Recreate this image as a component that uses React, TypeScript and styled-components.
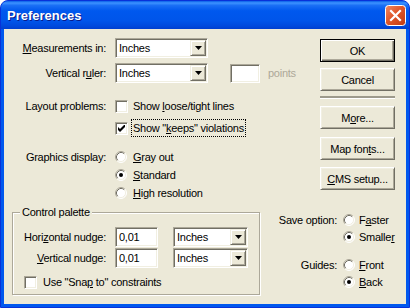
import React from 'react';
import styled, { createGlobalStyle } from 'styled-components';

const GlobalStyle = createGlobalStyle`
  html, body {
    margin: 0;
    padding: 0;
    background: #fff;
  }
  body {
    font-family: "Liberation Sans", Arial, sans-serif;
    font-size: 11px;
    line-height: 14px;
    letter-spacing: -0.25px;
    color: #000;
  }
`;

const Window = styled.div`
  width: 410px;
  height: 308px;
  box-sizing: border-box;
  display: flex;
  flex-direction: column;
  background: #0058ee;
  border: 1px solid #0831d9;
  border-radius: 8px 8px 0 0;
  overflow: hidden;
`;

const TitleBar = styled.div`
  height: 28px;
  flex-shrink: 0;
  display: flex;
  align-items: center;
  justify-content: space-between;
  padding: 1px 3px 0 6px;
  box-sizing: border-box;
  background: linear-gradient(
    180deg,
    #0a5fe8 0%,
    #3d93ff 7%,
    #1a6ff5 16%,
    #0058ee 35%,
    #0055ea 70%,
    #0049dc 90%,
    #003fcf 100%
  );
`;

const Title = styled.span`
  font-family: "Liberation Sans", Arial, sans-serif;
  font-weight: bold;
  font-size: 13px;
  letter-spacing: 0;
  color: #fff;
  text-shadow: 1px 1px 0 #0a1a8a;
`;

const CloseButton = styled.div`
  width: 21px;
  height: 21px;
  display: flex;
`;

const Client = styled.div`
  flex: 1;
  margin: 0 3px 3px 3px;
  background: #ece9d8;
  display: flex;
  flex-direction: column;
`;

const TopSection = styled.div`
  display: flex;
`;

const FormArea = styled.div`
  flex: 1;
  display: flex;
  flex-direction: column;
`;

const ButtonColumn = styled.div`
  width: 75px;
  margin: 10px 11px 0 0;
  display: flex;
  flex-direction: column;
`;

const BottomSection = styled.div`
  display: flex;
  align-items: flex-start;
`;

const FormRow = styled.div<{ $h?: number; $mt?: number }>`
  display: flex;
  align-items: center;
  height: ${p => p.$h ?? 20}px;
  margin-top: ${p => p.$mt ?? 0}px;
  white-space: nowrap;
`;

const Label = styled.span<{ $w: number; $gap?: number }>`
  width: ${p => p.$w}px;
  flex-shrink: 0;
  text-align: right;
  margin-right: ${p => p.$gap ?? 9}px;
  white-space: nowrap;
`;

const Sunken = styled.div<{ $w: number; $h?: number; $ml?: number }>`
  width: ${p => p.$w}px;
  height: ${p => p.$h ?? 20}px;
  margin-left: ${p => p.$ml ?? 0}px;
  box-sizing: border-box;
  flex-shrink: 0;
  display: flex;
  align-items: center;
  background: #fff;
  border: 1px solid;
  border-color: #aca899 #fff #fff #aca899;
  box-shadow: inset 1px 1px 0 #716f64, inset -1px -1px 0 #f1efe2;
  padding: 1px;
`;

const FieldText = styled.span`
  padding-left: 2px;
`;

const DropButton = styled.div`
  width: 16px;
  height: 16px;
  margin-left: auto;
  box-sizing: border-box;
  display: flex;
  align-items: center;
  justify-content: center;
  background: #ece9d8;
  border: 1px solid;
  border-color: #f1efe2 #716f64 #716f64 #f1efe2;
  box-shadow: inset 1px 1px 0 #fff, inset -1px -1px 0 #aca899;
`;

const DisabledText = styled.span`
  margin-left: 8px;
  color: #aca899;
`;

const PushButton = styled.div<{ $default?: boolean; $mt?: number }>`
  width: 75px;
  height: 23px;
  margin-top: ${p => p.$mt ?? 0}px;
  box-sizing: border-box;
  display: flex;
  align-items: center;
  justify-content: center;
  background: #ece9d8;
  border: 1px solid;
  border-color: ${p => (p.$default ? '#000' : '#fff #716f64 #716f64 #fff')};
  box-shadow: ${p =>
    p.$default
      ? 'inset 1px 1px 0 #fff, inset -1px -1px 0 #716f64, inset -2px -2px 0 #aca899'
      : 'inset 1px 1px 0 #f1efe2, inset -1px -1px 0 #aca899'};
`;

const Separator = styled.div`
  height: 2px;
  margin-top: 5px;
  background: #9d9a8c;
  border-bottom: 1px solid #fff;
`;

const CheckBox = styled.span`
  width: 13px;
  height: 13px;
  box-sizing: border-box;
  flex-shrink: 0;
  display: flex;
  align-items: center;
  justify-content: center;
  background: #fff;
  border: 1px solid;
  border-color: #aca899 #fff #fff #aca899;
  box-shadow: inset 1px 1px 0 #716f64, inset -1px -1px 0 #f1efe2;
`;

const OptionText = styled.span<{ $gap?: number }>`
  margin-left: ${p => p.$gap ?? 5}px;
`;

const FocusText = styled.span`
  margin-left: 3px;
  padding: 1px;
  border: 1px dotted #000;
`;

const U = styled.span`
  text-decoration: underline;
`;

const GroupBox = styled.fieldset`
  margin: 4px 0 0 8px;
  width: 248px;
  min-inline-size: 0;
  box-sizing: border-box;
  padding: 0 11px 4px 11px;
  border: 1px solid #aca899;
  box-shadow: inset 1px 1px 0 #fff, 1px 1px 0 #fff;
`;

const Legend = styled.legend`
  padding: 0 2px;
  margin-left: -4px;
  line-height: 12px;
  background: #ece9d8;
`;

const OptionsPanel = styled.div`
  margin-top: 10px;
  display: flex;
  flex-direction: column;
`;

const DownArrow = () => (
  <svg width="7" height="4" viewBox="0 0 7 4">
    <polygon points="0,0 7,0 3.5,4" fill="#000" />
  </svg>
);

const CheckMark = () => (
  <svg width="7" height="7" viewBox="0 0 7 7">
    <polygon points="0,2 2,4 6,0 7,0 7,2 2,7 0,5" fill="#000" />
  </svg>
);

const Radio = ({ checked }: { checked?: boolean }) => (
  <svg width="12" height="12" viewBox="0 0 12 12" style={{ flexShrink: 0 }}>
    <circle cx="6" cy="6" r="5" fill="#fff" />
    <path d="M2.11 9.89 A5.5 5.5 0 0 1 9.89 2.11" fill="none" stroke="#aca899" />
    <path d="M9.89 2.11 A5.5 5.5 0 0 1 2.11 9.89" fill="none" stroke="#fff" />
    <path d="M2.82 9.18 A4.5 4.5 0 0 1 9.18 2.82" fill="none" stroke="#716f64" />
    <path d="M9.18 2.82 A4.5 4.5 0 0 1 2.82 9.18" fill="none" stroke="#f1efe2" />
    {checked && <circle cx="6" cy="6" r="2" fill="#000" />}
  </svg>
);

const Combo = ({ w, value }: { w: number; value: string }) => (
  <Sunken $w={w}>
    <FieldText>{value}</FieldText>
    <DropButton>
      <DownArrow />
    </DropButton>
  </Sunken>
);

const App = () => (
  <>
    <GlobalStyle />
    <Window>
      <TitleBar>
        <Title>Preferences</Title>
        <CloseButton>
          <svg width="21" height="21" viewBox="0 0 21 21">
            <defs>
              <linearGradient id="closeGrad" x1="0" y1="0" x2="1" y2="1">
                <stop offset="0" stopColor="#f08a64" />
                <stop offset="0.45" stopColor="#e0572b" />
                <stop offset="1" stopColor="#c13a12" />
              </linearGradient>
            </defs>
            <rect x="0.5" y="0.5" width="20" height="20" rx="3" fill="url(#closeGrad)" stroke="#fff" />
            <path d="M6 6 L15 15 M15 6 L6 15" stroke="#fff" strokeWidth="2.2" strokeLinecap="square" />
          </svg>
        </CloseButton>
      </TitleBar>
      <Client>
        <TopSection>
          <FormArea>
            <FormRow $mt={9}>
              <Label $w={102}>
                <U>M</U>easurements in:
              </Label>
              <Combo w={93} value="Inches" />
            </FormRow>
            <FormRow $mt={5}>
              <Label $w={102}>
                Vertical r<U>u</U>ler:
              </Label>
              <Combo w={93} value="Inches" />
              <Sunken $w={30} $h={19} $ml={22} />
              <DisabledText>points</DisabledText>
            </FormRow>
            <FormRow $h={18} $mt={14}>
              <Label $w={102}>Layout problems:</Label>
              <CheckBox />
              <OptionText>
                Show <U>l</U>oose/tight lines
              </OptionText>
            </FormRow>
            <FormRow $h={18} $mt={4}>
              <Label $w={102} />
              <CheckBox>
                <CheckMark />
              </CheckBox>
              <FocusText>
                Show &quot;<U>k</U>eeps&quot; violations
              </FocusText>
            </FormRow>
            <FormRow $h={18} $mt={11}>
              <Label $w={102}>Graphics display:</Label>
              <Radio />
              <OptionText $gap={6}>
                <U>G</U>ray out
              </OptionText>
            </FormRow>
            <FormRow $h={18}>
              <Label $w={102} />
              <Radio checked />
              <OptionText $gap={6}>
                <U>S</U>tandard
              </OptionText>
            </FormRow>
            <FormRow $h={18}>
              <Label $w={102} />
              <Radio />
              <OptionText $gap={6}>
                <U>H</U>igh resolution
              </OptionText>
            </FormRow>
          </FormArea>
          <ButtonColumn>
            <PushButton $default>OK</PushButton>
            <PushButton $mt={6}>Cancel</PushButton>
            <Separator />
            <PushButton $mt={7}>
              M<U>o</U>re...
            </PushButton>
            <PushButton $mt={8}>
              Map fon<U>t</U>s...
            </PushButton>
            <PushButton $mt={7}>
              <U>C</U>MS setup...
            </PushButton>
          </ButtonColumn>
        </TopSection>
        <BottomSection>
          <GroupBox>
            <Legend>Control palette</Legend>
            <FormRow $mt={9}>
              <Label $w={82}>
                Hori<U>z</U>ontal nudge:
              </Label>
              <Sunken $w={43}>
                <FieldText>0,01</FieldText>
              </Sunken>
              <Sunken $w={75} $ml={15}>
                <FieldText>Inches</FieldText>
                <DropButton>
                  <DownArrow />
                </DropButton>
              </Sunken>
            </FormRow>
            <FormRow $mt={1}>
              <Label $w={82}>
                <U>V</U>ertical nudge:
              </Label>
              <Sunken $w={43}>
                <FieldText>0,01</FieldText>
              </Sunken>
              <Sunken $w={75} $ml={15}>
                <FieldText>Inches</FieldText>
                <DropButton>
                  <DownArrow />
                </DropButton>
              </Sunken>
            </FormRow>
            <FormRow $h={16} $mt={6}>
              <CheckBox />
              <OptionText $gap={6}>
                Use &quot;Sna<U>p</U> to&quot; constraints
              </OptionText>
            </FormRow>
          </GroupBox>
          <OptionsPanel>
            <FormRow $h={16}>
              <Label $w={77} $gap={6}>
                Save option:
              </Label>
              <Radio />
              <OptionText $gap={4}>
                F<U>a</U>ster
              </OptionText>
            </FormRow>
            <FormRow $h={16} $mt={1}>
              <Label $w={77} $gap={6} />
              <Radio checked />
              <OptionText $gap={4}>
                Smalle<U>r</U>
              </OptionText>
            </FormRow>
            <FormRow $h={16} $mt={12}>
              <Label $w={77} $gap={6}>
                Guides:
              </Label>
              <Radio />
              <OptionText $gap={4}>
                <U>F</U>ront
              </OptionText>
            </FormRow>
            <FormRow $h={16} $mt={1}>
              <Label $w={77} $gap={6} />
              <Radio checked />
              <OptionText $gap={4}>
                <U>B</U>ack
              </OptionText>
            </FormRow>
          </OptionsPanel>
        </BottomSection>
      </Client>
    </Window>
  </>
);

export default App;
